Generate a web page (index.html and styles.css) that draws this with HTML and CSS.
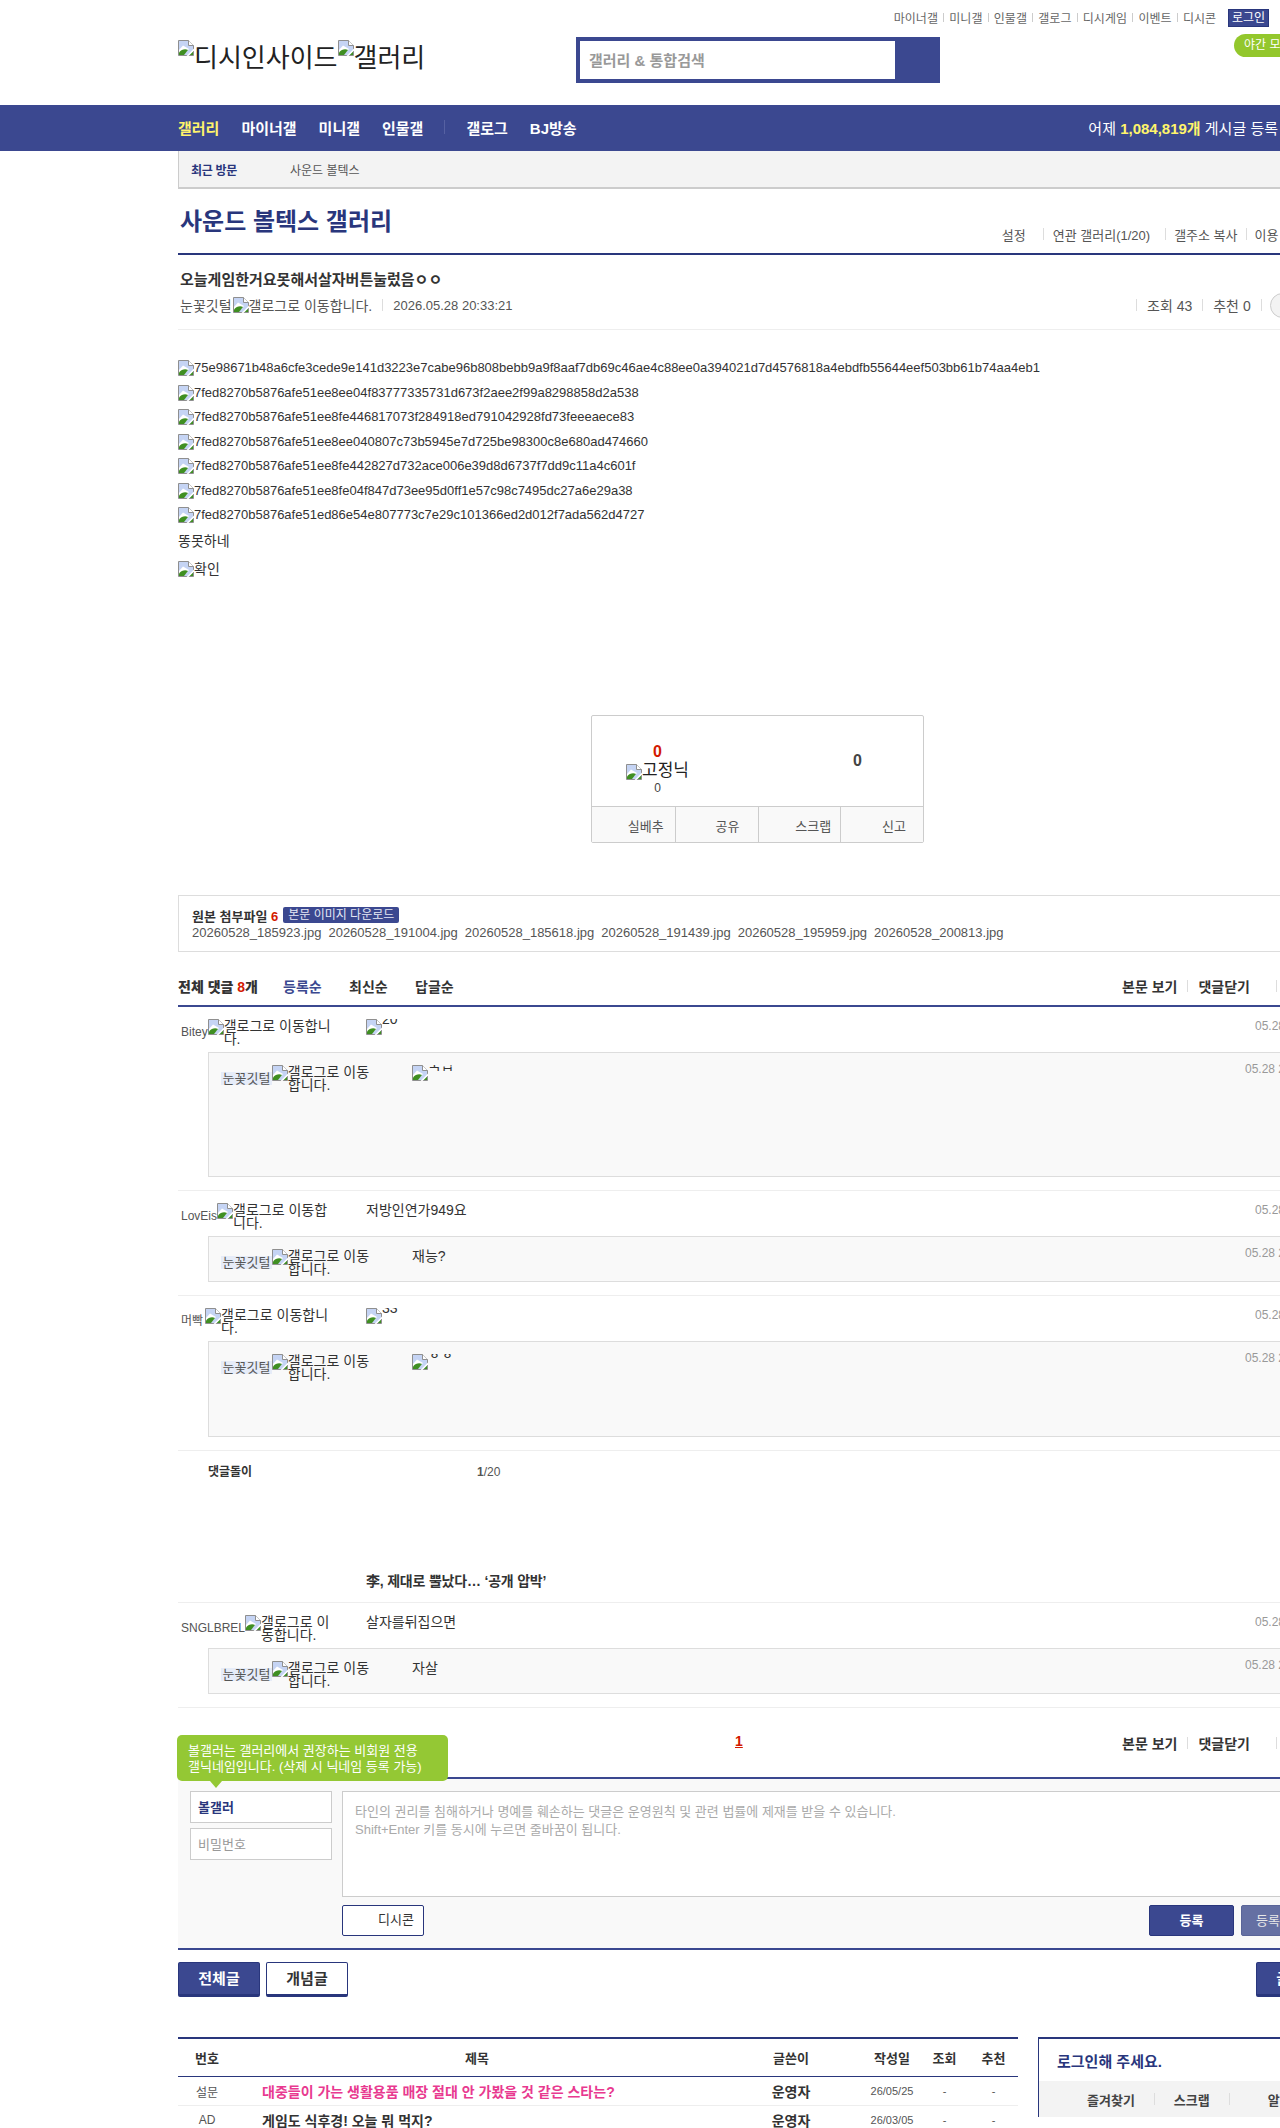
FILE: index.html
```html
<!DOCTYPE html>
<html lang="ko">
<head>
    <meta charset="UTF-8">
    <meta name="viewport" content="width=device-width, initial-scale=1.0">
    <title>사운드 볼텍스 갤러리</title>
    <link rel="stylesheet" href="styles.css">
</head>
<body>
    <svg class="defs" width="0" height="0">
        <symbol id="broken" viewBox="0 0 16 16">
            <path d="M0.5 0.5H10.5L15.5 5.5V15.5H0.5Z" fill="#c5d4f4" stroke="#8f8f8f"/>
            <path d="M10.5 0.5V5.5H15.5" fill="#fff" stroke="#8f8f8f"/>
            <path d="M1 10L5 5.5L11 9L5 15H1Z" fill="#fff"/>
            <path d="M1 15V12.5C3.5 9.5 7 8.5 10 10L6 15Z" fill="#3f8f22"/>
            <path d="M15 11.5L11.5 15H15Z" fill="#3f8f22"/>
            <path d="M16 8.5L8.5 16H10.5L16 10.5Z" fill="#fff"/>
        </symbol>
    </svg>

    <!-- 상단 -->
    <header class="top wrap">
        <div class="gnb">
            <a>마이너갤</a><i></i><a>미니갤</a><i></i><a>인물갤</a><i></i><a>갤로그</a><i></i><a>디시게임</a><i></i><a>이벤트</a><i></i><a>디시콘</a>
            <span class="login-btn">로그인</span>
        </div>
        <div class="top-row">
            <div class="logo">
                <svg class="ico"><use href="#broken"/></svg>디시인사이드<svg class="ico"><use href="#broken"/></svg>갤러리
            </div>
            <div class="search"><div class="search-input">갤러리 &amp; 통합검색</div></div>
            <span class="night">야간 모드</span>
        </div>
    </header>

    <nav class="nav">
        <div class="wrap nav-in">
            <a class="on">갤러리</a><a>마이너갤</a><a>미니갤</a><a>인물갤</a><i></i><a>갤로그</a><a>BJ방송</a>
            <p class="nav-stat">어제 <b>1,084,819개</b> 게시글 등록</p>
        </div>
    </nav>

    <div class="wrap">
        <div class="recent"><b>최근 방문</b><span>사운드 볼텍스</span></div>

        <div class="gall-head">
            <h2>사운드 볼텍스 갤러리</h2>
            <div class="gall-links">
                <a>설정</a><i></i><a>연관 갤러리(1/20)</a><i></i><a>갤주소 복사</a><i></i><a>이용 안내</a>
            </div>
        </div>

        <!-- 글 -->
        <div class="post-head">
            <h3>오늘게임한거요못해서살자버튼눌렀음ㅇㅇ</h3>
            <div class="post-info">
                <span>눈꽃깃털</span><svg class="ico post-ico"><use href="#broken"/></svg><span>갤로그로 이동합니다.</span>
                <i></i><span class="post-date">2026.05.28 20:33:21</span>
                <div class="post-count">
                    <i></i><span>조회 43</span><i></i><span>추천 0</span><i></i><span class="round"></span>
                </div>
            </div>
        </div>

        <div class="post-body">
            <p><svg class="ico"><use href="#broken"/></svg>75e98671b48a6cfe3cede9e141d3223e7cabe96b808bebb9a9f8aaf7db69c46ae4c88ee0a394021d7d4576818a4ebdfb55644eef503bb61b74aa4eb1</p>
            <p><svg class="ico"><use href="#broken"/></svg>7fed8270b5876afe51ee8ee04f83777335731d673f2aee2f99a8298858d2a538</p>
            <p><svg class="ico"><use href="#broken"/></svg>7fed8270b5876afe51ee8fe446817073f284918ed791042928fd73feeeaece83</p>
            <p><svg class="ico"><use href="#broken"/></svg>7fed8270b5876afe51ee8ee040807c73b5945e7d725be98300c8e680ad474660</p>
            <p><svg class="ico"><use href="#broken"/></svg>7fed8270b5876afe51ee8fe442827d732ace006e39d8d6737f7dd9c11a4c601f</p>
            <p><svg class="ico"><use href="#broken"/></svg>7fed8270b5876afe51ee8fe04f847d73ee95d0ff1e57c98c7495dc27a6e29a38</p>
            <p><svg class="ico"><use href="#broken"/></svg>7fed8270b5876afe51ed86e54e807773c7e29c101366ed2d012f7ada562d4727</p>
            <p class="post-text">똥못하네</p>
            <p class="post-text"><svg class="ico"><use href="#broken"/></svg>확인</p>
        </div>

        <div class="vote">
            <div class="vote-top">
                <div class="vote-up">
                    <b>0</b>
                    <div class="vote-fix"><svg class="ico"><use href="#broken"/></svg>고정닉</div>
                    <span>0</span>
                </div>
                <b class="vote-down">0</b>
            </div>
            <div class="vote-btns"><a>실베추</a><a>공유</a><a>스크랩</a><a>신고</a></div>
        </div>

        <div class="attach">
            <div class="attach-top"><b>원본 첨부파일 <em>6</em></b><span class="badge">본문 이미지 다운로드</span></div>
            <div class="attach-files">
                <a>20260528_185923.jpg</a><a>20260528_191004.jpg</a><a>20260528_185618.jpg</a><a>20260528_191439.jpg</a><a>20260528_195959.jpg</a><a>20260528_200813.jpg</a>
            </div>
        </div>

        <!-- 댓글 -->
        <div class="cmt-head">
            <b>전체 댓글 <em>8</em>개</b>
            <a class="on">등록순</a><a>최신순</a><a>답글순</a>
            <div class="cmt-tools"><a>본문 보기</a><i></i><a>댓글닫기</a><i></i></div>
        </div>

        <ul class="cmt-list">
            <li class="cmt">
                <div class="cmt-row">
                    <div class="who"><span>Bitey</span><svg class="ico"><use href="#broken"/></svg><span class="alt">갤로그로 이동합니다.</span></div>
                    <div class="txt"><svg class="ico"><use href="#broken"/></svg><span class="cut">20</span></div>
                    <span class="date">05.28 20:35:11</span>
                </div>
                <div class="reply reply-a">
                    <div class="who"><span class="me">눈꽃깃털</span><svg class="ico"><use href="#broken"/></svg><span class="alt">갤로그로 이동합니다.</span></div>
                    <div class="txt"><svg class="ico"><use href="#broken"/></svg><span class="cut">국밥</span></div>
                    <span class="date">05.28 20:36:40</span>
                </div>
            </li>
            <li class="cmt">
                <div class="cmt-row">
                    <div class="who"><span>LovEis</span><svg class="ico"><use href="#broken"/></svg><span class="alt">갤로그로 이동합니다.</span></div>
                    <div class="txt">저방인연가949요</div>
                    <span class="date">05.28 20:40:02</span>
                </div>
                <div class="reply">
                    <div class="who"><span class="me">눈꽃깃털</span><svg class="ico"><use href="#broken"/></svg><span class="alt">갤로그로 이동합니다.</span></div>
                    <div class="txt">재능?</div>
                    <span class="date">05.28 20:42:18</span>
                </div>
            </li>
            <li class="cmt">
                <div class="cmt-row">
                    <div class="who"><span class="small">머빡</span><svg class="ico"><use href="#broken"/></svg><span class="alt">갤로그로 이동합니다.</span></div>
                    <div class="txt"><svg class="ico"><use href="#broken"/></svg><span class="cut">33</span></div>
                    <span class="date">05.28 20:50:33</span>
                </div>
                <div class="reply reply-b">
                    <div class="who"><span class="me">눈꽃깃털</span><svg class="ico"><use href="#broken"/></svg><span class="alt">갤로그로 이동합니다.</span></div>
                    <div class="txt"><svg class="ico"><use href="#broken"/></svg><span class="cut">ㅎㅎ</span></div>
                    <span class="date">05.28 20:52:09</span>
                </div>
            </li>
            <li class="dory">
                <div class="dory-top"><b>댓글돌이</b><span><b>1</b>/20</span></div>
                <b class="dory-title">李, 제대로 뿔났다… ‘공개 압박’</b>
            </li>
            <li class="cmt">
                <div class="cmt-row">
                    <div class="who"><span>SNGLBREL</span><svg class="ico"><use href="#broken"/></svg><span class="alt">갤로그로 이동합니다.</span></div>
                    <div class="txt">살자를뒤집으면</div>
                    <span class="date">05.28 21:03:47</span>
                </div>
                <div class="reply">
                    <div class="who"><span class="me">눈꽃깃털</span><svg class="ico"><use href="#broken"/></svg><span class="alt">갤로그로 이동합니다.</span></div>
                    <div class="txt">자살</div>
                    <span class="date">05.28 21:05:26</span>
                </div>
            </li>
        </ul>

        <div class="cmt-foot">
            <a class="page-on">1</a>
            <div class="cmt-tools"><a>본문 보기</a><i></i><a>댓글닫기</a><i></i></div>
        </div>

        <!-- 댓글 쓰기 -->
        <div class="write">
            <div class="tip">볼갤러는 갤러리에서 권장하는 비회원 전용<br>갤닉네임입니다. (삭제 시 닉네임 등록 가능)</div>
            <div class="write-in">
                <div class="write-user">
                    <div class="field field-name">볼갤러</div>
                    <div class="field">비밀번호</div>
                </div>
                <div class="write-main">
                    <div class="write-area">타인의 권리를 침해하거나 명예를 훼손하는 댓글은 운영원칙 및 관련 법률에 제재를 받을 수 있습니다.<br>Shift+Enter 키를 동시에 누르면 줄바꿈이 됩니다.</div>
                    <div class="write-btns">
                        <span class="dccon">디시콘</span>
                        <span class="btn-sm">등록</span>
                        <span class="btn-sm btn-light">등록+추천</span>
                    </div>
                </div>
            </div>
        </div>

        <div class="list-tabs">
            <a class="tab tab-on">전체글</a><a class="tab">개념글</a>
            <a class="tab tab-on tab-write">글쓰기</a>
        </div>

        <!-- 글 목록 -->
        <div class="bottom">
            <table class="list">
                <thead>
                    <tr><th class="c-no">번호</th><th>제목</th><th class="c-user">글쓴이</th><th class="c-date">작성일</th><th class="c-num">조회</th><th class="c-num">추천</th></tr>
                </thead>
                <tbody>
                    <tr>
                        <td class="no">설문</td><td class="ttl ttl-pink">대중들이 가는 생활용품 매장 절대 안 가봤을 것 같은 스타는?</td>
                        <td class="user">운영자</td><td class="day">26/05/25</td><td class="num">-</td><td class="num">-</td>
                    </tr>
                    <tr>
                        <td class="no">AD</td><td class="ttl">게임도 식후경! 오늘 뭐 먹지?</td>
                        <td class="user">운영자</td><td class="day">26/03/05</td><td class="num">-</td><td class="num">-</td>
                    </tr>
                </tbody>
            </table>
            <div class="login-box">
                <b>로그인해 주세요.</b>
                <div class="login-links"><a>즐겨찾기</a><i></i><a>스크랩</a><i></i><a>알림</a></div>
            </div>
        </div>
    </div>
</body>
</html>
```

FILE: styles.css
```css
html, body {
    margin: 0;
    height: 2128px;
    overflow: hidden;
}

body {
    background: #fff;
    color: #333;
    font-family: "Liberation Sans", "Noto Sans CJK KR", sans-serif;
    font-size: 13px;
}

.defs {
    position: absolute;
}

.ico {
    display: block;
    flex: none;
    width: 16px;
    height: 16px;
}

em {
    font-style: normal;
    color: #d31900;
}

h2, h3, p, ul {
    margin: 0;
    padding: 0;
}

ul {
    list-style: none;
}

.wrap {
    width: 1160px;
    margin-left: 178px;
}

/* 상단 */
.top {
    height: 105px;
}

.gnb {
    display: flex;
    align-items: center;
    justify-content: flex-end;
    padding: 9px 69px 0 0;
    font-size: 12px;
    color: #666;
}

.gnb a {
    margin-top: -2px;
}

.gnb i {
    width: 1px;
    height: 9px;
    margin: -2px 5.2px 0;
    background: #ccc;
}

.login-btn {
    margin-left: 12px;
    width: 41px;
    height: 18px;
    line-height: 16px;
    text-align: center;
    color: #fff;
    background: #3b4890;
    border: 1px solid #29367c;
    box-sizing: border-box;
}

.top-row {
    position: relative;
    display: flex;
    margin-top: 10px;
}

.logo {
    display: flex;
    align-items: flex-start;
    width: 398px;
    padding-top: 3px;
    font-size: 26px;
    line-height: 36px;
    color: #222;
}

.search {
    width: 315px;
    height: 38px;
    padding: 4px 45px 4px 4px;
    background: #3b4890;
}

.search-input {
    height: 38px;
    line-height: 40px;
    padding-left: 9px;
    font-size: 15px;
    font-weight: bold;
    color: #999;
    background: #fff;
}

.night {
    position: absolute;
    left: 1056px;
    top: -3px;
    width: 90px;
    height: 23px;
    line-height: 23px;
    padding-left: 10px;
    font-size: 12px;
    color: #fff;
    background: #93c72c;
    border-radius: 12px;
}

.nav {
    height: 46px;
    background: #3b4890;
}

.nav-in {
    display: flex;
    align-items: center;
    gap: 22px;
    height: 44px;
    padding-bottom: 2px;
    font-size: 15px;
    font-weight: bold;
    color: #fff;
}

.nav-in .on {
    color: #fff46b;
}

.nav-in i {
    width: 1px;
    height: 14px;
    margin: 0 -1px;
    background: #5661a2;
}

.nav-stat {
    margin-left: auto;
    padding-right: 60px;
    font-weight: normal;
    white-space: nowrap;
}

.nav-stat b {
    color: #fff46b;
}

.recent {
    display: flex;
    align-items: center;
    height: 36px;
    padding-left: 12px;
    font-size: 12px;
    color: #555;
    background: #f3f3f3;
    border-left: 1px solid #ccc;
    border-bottom: 2px solid #ccc;
}

.recent b {
    width: 99px;
    letter-spacing: -0.3px;
    color: #29367c;
}

/* 갤러리 제목 */
.gall-head {
    display: flex;
    align-items: flex-end;
    justify-content: space-between;
    height: 64px;
    padding: 0 0 0 2px;
    border-bottom: 2px solid #29367c;
}

.gall-head h2 {
    align-self: flex-start;
    margin-top: 18px;
    font-size: 24px;
    line-height: 30px;
    color: #29367c;
}

.gall-links {
    display: flex;
    align-items: center;
    height: 14px;
    margin-bottom: 12px;
    padding-right: 32px;
    color: #555;
    white-space: nowrap;
}

.gall-links i {
    width: 1px;
    height: 12px;
    margin: 0 8px;
    background: #ddd;
}

.gall-links i:nth-child(2) {
    margin: 0 9px 0 17px;
}

.gall-links i:nth-child(4) {
    margin-left: 15px;
}

/* 글 머리 */
.post-head {
    height: 74px;
    padding-left: 2px;
    border-bottom: 1px solid #eee;
}

.post-head h3 {
    padding-top: 15px;
    font-size: 15px;
    line-height: 20px;
    color: #333;
}

.post-info {
    display: flex;
    align-items: center;
    margin-top: 3px;
    height: 24px;
    font-size: 14px;
    color: #555;
}

.post-ico {
    margin-left: 1px;
}

.post-info > i, .post-count i {
    width: 1px;
    height: 12px;
    margin: 0 10px;
    background: #ddd;
}

.post-date {
    font-size: 13px;
}

.post-count {
    display: flex;
    align-items: center;
    margin-left: auto;
    width: 202px;
}

.post-count i:first-child {
    margin-left: 0;
}

.round {
    flex: none;
    width: 23px;
    height: 23px;
    margin-left: -2px;
    border: 1px solid #ccc;
    border-radius: 50%;
    background: #f3f3f3;
}

/* 글 본문 */
.post-body {
    padding-top: 30px;
    height: 385px;
    box-sizing: border-box;
}

.post-body p {
    display: flex;
    align-items: center;
    height: 16px;
    margin-bottom: 8.5px;
    line-height: 16px;
    color: #333;
}

.post-body .post-text {
    font-size: 14px;
    margin-top: 10px;
}

.post-body .post-text + .post-text {
    margin-top: 12px;
}

.vote {
    width: 331px;
    height: 126px;
    margin-left: 413px;
    border: 1px solid #ccc;
    border-radius: 2px;
}

.vote-top {
    position: relative;
    display: flex;
    height: 90px;
    border-bottom: 1px solid #ccc;
}

.vote-up {
    display: flex;
    flex-direction: column;
    align-items: center;
    width: 131px;
    padding-top: 27px;
    box-sizing: border-box;
}

.vote-up b {
    font-size: 16px;
    line-height: 18px;
    color: #d31900;
}

.vote-fix {
    display: flex;
    align-items: flex-start;
    height: 16px;
    margin-top: 3px;
    font-size: 17px;
    line-height: 14px;
    color: #222;
}

.vote-up span {
    margin-top: 1px;
    font-size: 12px;
    line-height: 14px;
    color: #444;
}

.vote-down {
    margin: 36px 0 0 130px;
    font-size: 16px;
    line-height: 18px;
    color: #444;
}

.vote-btns {
    display: grid;
    grid-template-columns: repeat(4, 1fr);
    height: 35px;
    background: #f9f9f9;
}

.vote-btns a {
    height: 35px;
    padding: 4px 11px 0 0;
    box-sizing: border-box;
    line-height: 31px;
    text-align: right;
    color: #555;
    border-left: 1px solid #ccc;
}

.vote-btns a:first-child {
    border-left: 0;
}

.vote-btns a:nth-child(2) {
    padding-right: 18px;
}

.vote-btns a:nth-child(3) {
    padding-right: 9px;
}

.vote-btns a:nth-child(4) {
    padding-right: 17px;
}

/* 첨부 */
.attach {
    height: 55px;
    margin-top: 52px;
    padding-left: 13px;
    border: 1px solid #ddd;
}

.attach-top {
    display: flex;
    align-items: center;
    gap: 5px;
    height: 16px;
    margin-top: 11px;
}

.attach-top b {
    color: #333;
}

.badge {
    height: 16px;
    padding: 0 5px;
    line-height: 16px;
    font-size: 12px;
    color: #e6e8f5;
    background: #3b4890;
    border-radius: 2px;
}

.attach-files {
    display: flex;
    gap: 7px;
    margin-top: 2px;
    line-height: 16px;
    color: #555;
    white-space: nowrap;
}

/* 댓글 */
.cmt-head {
    display: flex;
    align-items: center;
    height: 38px;
    padding-top: 15px;
    border-bottom: 2px solid #3b4890;
    font-size: 14px;
    font-weight: bold;
}

.cmt-head > b {
    width: 105px;
}

.cmt-head > a {
    width: 66px;
}

.cmt-head .on {
    color: #3b4890;
}

.cmt-tools {
    display: flex;
    align-items: center;
    margin-left: auto;
    padding-right: 51px;
    font-size: 14px;
    font-weight: bold;
    color: #333;
}

.cmt-tools i {
    width: 1px;
    height: 12px;
    margin: 0 10px;
    background: #ddd;
}

.cmt-tools i:last-child {
    margin-left: 26px;
}

.cmt {
    padding: 12px 0 13px;
    border-bottom: 1px solid #eee;
}

.cmt-row {
    display: flex;
    height: 26px;
}

.who {
    display: flex;
    flex: none;
    align-items: flex-start;
    width: 155px;
    padding-left: 3px;
    font-size: 12px;
    line-height: 26px;
    color: #555;
}

.who .small {
    margin-right: 2px;
}

.alt {
    flex: 1;
    min-width: 0;
    font-size: 14px;
    line-height: 13px;
    color: #333;
    padding-top: 1px;
}

.txt {
    display: flex;
    flex: 1;
    align-items: flex-start;
    padding-left: 30px;
    font-size: 14px;
    line-height: 14px;
    color: #333;
}

/* 높이가 작은 이미지의 대체 텍스트: 아랫부분만 보임 */
.cut {
    height: 6px;
    overflow: hidden;
    line-height: 0;
}

.date {
    flex: none;
    width: 83px;
    font-size: 12px;
    line-height: 14px;
    color: #999;
}

.reply {
    display: flex;
    height: 46px;
    margin: 7px 0 0 30px;
    padding: 12px 0 0 12px;
    box-sizing: border-box;
    background: #f9f9f9;
    border: 1px solid #ddd;
    border-right: 0;
}

.reply-a {
    height: 125px;
}

.reply-b {
    height: 96px;
}

.reply .who {
    width: 155px;
    padding-left: 0;
}

.reply .txt {
    padding-left: 36px;
}

.reply .date {
    width: 93px;
    line-height: 16px;
    margin-top: -4px;
}

.me {
    height: 13px;
    margin-top: 7px;
    padding: 0 1.5px;
    font-size: 13px;
    line-height: 13px;
    background: #e6ecf8;
}

.dory {
    height: 151px;
    padding-left: 30px;
    border-bottom: 1px solid #eee;
}

.dory-top {
    display: flex;
    padding-top: 14px;
    font-size: 12px;
    line-height: 14px;
}

.dory-top > b {
    width: 269px;
}

.dory-top span {
    color: #555;
}

.dory-title {
    display: block;
    margin: 93px 0 0 158px;
    font-size: 14px;
    line-height: 18px;
    letter-spacing: -0.2px;
}

.cmt-foot {
    display: flex;
    align-items: flex-start;
    height: 69px;
    padding-top: 25px;
    box-sizing: border-box;
}

.page-on {
    margin-left: 557px;
    font-size: 14px;
    font-weight: bold;
    color: #d31900;
    text-decoration: underline;
}

.write {
    position: relative;
    border-top: 2px solid #3b4890;
    border-bottom: 2px solid #3b4890;
    background: #f9f9f9;
}

.tip {
    position: absolute;
    left: -1px;
    top: -44px;
    width: 271px;
    height: 46px;
    padding: 8px 0 0 11px;
    box-sizing: border-box;
    font-size: 13px;
    line-height: 16px;
    color: #fff;
    background: #94c834;
    border-radius: 5px;
}

.tip::after {
    content: "";
    position: absolute;
    left: 33px;
    top: 46px;
    border: 6px solid transparent;
    border-top: 7px solid #94c834;
    border-bottom: 0;
}

.write-in {
    display: flex;
    height: 169px;
    padding: 12px 0 0 12px;
    box-sizing: border-box;
}

.write-user {
    width: 152px;
}

.field {
    width: 142px;
    height: 32px;
    margin-bottom: 5px;
    padding-left: 7px;
    line-height: 31px;
    box-sizing: border-box;
    color: #999;
    background: #fff;
    border: 1px solid #ccc;
}

.field-name {
    font-weight: bold;
    color: #29367c;
}

.write-main {
    flex: 1;
}

.write-area {
    height: 106px;
    padding: 11px 0 0 12px;
    box-sizing: border-box;
    line-height: 18px;
    color: #aaa;
    background: #fff;
    border: 1px solid #ccc;
    border-right: 0;
}

.write-btns {
    display: flex;
    gap: 7px;
    margin-top: 8px;
}

.dccon {
    width: 82px;
    height: 31px;
    margin-right: auto;
    padding-right: 9px;
    box-sizing: border-box;
    line-height: 28px;
    text-align: right;
    background: #fff;
    border: 1px solid #29367c;
    border-radius: 2px;
}

.btn-sm {
    width: 85px;
    height: 31px;
    line-height: 29px;
    text-align: center;
    font-weight: bold;
    color: #fff;
    background: #3b4890;
    border: 1px solid #29367c;
    border-radius: 2px;
    box-sizing: border-box;
}

.btn-light {
    margin-right: 12px;
    padding-left: 14px;
    text-align: left;
    font-weight: normal;
    color: #e8e8e8;
    background: #6570a3;
    border-color: #5a6598;
}

.list-tabs {
    display: flex;
    gap: 6px;
    margin-top: 12px;
}

.tab {
    width: 82px;
    height: 35px;
    line-height: 32px;
    text-align: center;
    box-sizing: border-box;
    font-size: 15px;
    font-weight: bold;
    background: #fff;
    border: 1px solid #29367c;
    border-bottom-width: 3px;
    border-radius: 2px;
}

.tab-on {
    color: #fff;
    background: #3b4890;
}

.tab-write {
    margin-left: auto;
}

/* 글 목록 */
.bottom {
    display: flex;
    gap: 20px;
    margin-top: 40px;
}

.list {
    width: 840px;
    flex: none;
    table-layout: fixed;
    border-collapse: collapse;
    border-top: 2px solid #29367c;
}

.list th {
    height: 37px;
    padding: 0;
    font-size: 13px;
    color: #333;
    border-bottom: 1px solid #29367c;
}

.list td {
    height: 28px;
    padding: 0;
    text-align: center;
    border-bottom: 1px solid #eee;
}

.c-no {
    width: 58px;
}

.c-user {
    width: 146px;
}

.c-date {
    width: 56px;
}

.c-num {
    width: 49px;
}

.list .no {
    font-size: 12px;
    color: #555;
}

.list .ttl {
    padding-left: 26px;
    text-align: left;
    font-size: 14px;
    font-weight: bold;
    white-space: nowrap;
}

.list .ttl-pink {
    color: #e8398f;
}

.list .user {
    font-size: 14px;
    font-weight: bold;
}

.list .day, .list .num {
    font-size: 11px;
    color: #555;
}

.login-box {
    width: 300px;
    flex: none;
    height: 80px;
    box-sizing: border-box;
    border: 1px solid #29367c;
    border-top-width: 2px;
}

.login-box > b {
    display: block;
    height: 42px;
    padding-left: 18px;
    line-height: 46px;
    font-size: 15px;
    color: #29367c;
}

.login-links {
    display: flex;
    align-items: center;
    height: 36px;
    padding-left: 48px;
    font-weight: bold;
    color: #444;
    background: #f3f3f3;
}

.login-links i {
    width: 1px;
    height: 12px;
    margin: 0 19px;
    background: #ddd;
}

.login-links i:last-of-type {
    margin-right: 38px;
}
```
